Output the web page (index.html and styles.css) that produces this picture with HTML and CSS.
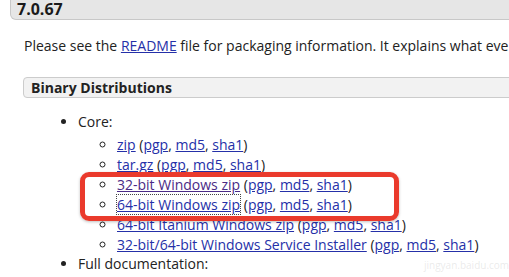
FILE: index.html
```html
<!DOCTYPE html>
<html lang="en">
<head>
  <meta charset="UTF-8">
  <title>Tomcat 7.0.67 downloads</title>
  <link rel="stylesheet" href="styles.css">
</head>
<body>

  <section class="page">
    <h3 class="version">7.0.67</h3>

    <div class="version-body">
      <p class="intro">Please see the <a href="#">README</a> file for packaging information. It explains what every distribution contains.</p>

      <h4 class="dist-title">Binary Distributions</h4>

      <ul class="dist-list">
        <li>Core:
          <ul class="sub-list">
            <li><a href="#">zip</a> (<a href="#">pgp</a>, <a href="#">md5</a>, <a href="#">sha1</a>)</li>
            <li><a href="#">tar.gz</a> (<a href="#">pgp</a>, <a href="#">md5</a>, <a href="#">sha1</a>)</li>
            <li><a href="#" class="visited">32-bit Windows zip</a> (<a href="#">pgp</a>, <a href="#">md5</a>, <a href="#">sha1</a>)</li>
            <li><a href="#" class="focused">64-bit Windows zip</a> (<a href="#">pgp</a>, <a href="#">md5</a>, <a href="#">sha1</a>)</li>
            <li><a href="#">64-bit Itanium Windows zip</a> (<a href="#">pgp</a>, <a href="#">md5</a>, <a href="#">sha1</a>)</li>
            <li><a href="#">32-bit/64-bit Windows Service Installer</a> (<a href="#">pgp</a>, <a href="#">md5</a>, <a href="#">sha1</a>)</li>
          </ul>
        </li>
        <li>Full documentation:</li>
      </ul>
    </div>
  </section>

  <!-- highlight drawn over the two windows rows -->
  <div class="highlight"></div>

  <div class="watermark">jingyan.baidu.com</div>

</body>
</html>
```

FILE: styles.css
```css
body {
  margin: 0;
  background: #fff;
  font-family: 'Open Sans', 'Liberation Sans', sans-serif;
  font-size: 14px;
  color: #222;
  overflow: hidden;
}

a {
  color: #2530a8;
}
a.visited {
  color: #4a2a86;
}
a.focused {
  outline: 1px dotted #444;
}

.page {
  width: 620px;
}

.version {
  margin: 0 0 0 10px;
  height: 20px;
  line-height: 19px;
  padding-left: 6px;
  font-size: 16px;
  font-weight: bold;
  color: #1a1a1a;
  background: #e6e6e6;
  border: 1px solid #c8c8c8;
  border-top: none;
  border-radius: 0 0 0 6px;
  box-sizing: border-box;
}

.version-body {
  margin-left: 23px;
}

.intro {
  margin: 16px 0 0 1px;
  line-height: 20px;
  white-space: nowrap;
}

.dist-title {
  margin: 21px 0 0;
  height: 21px;
  line-height: 19px;
  padding-left: 7px;
  font-size: 14px;
  font-weight: bold;
  background: #f2f2f2;
  border: 1px solid #cccccc;
  border-radius: 4px;
  box-sizing: border-box;
}

.dist-list {
  margin: 14px 0 0;
  padding-left: 55px;
  line-height: 20px;
}

.sub-list {
  margin: 3px 0 -1px;
  padding-left: 39px;
  list-style: circle;
  white-space: nowrap;
}

.highlight {
  position: absolute;
  left: 80px;
  top: 172px;
  width: 319px;
  height: 49px;
  box-sizing: border-box;
  border: 5px solid #ea3a2c;
  border-radius: 9px;
  box-shadow: 0 1px 3px rgba(0, 0, 0, 0.25);
}

.watermark {
  position: absolute;
  left: 424px;
  top: 258px;
  font-size: 10px;
  color: rgba(170, 170, 170, 0.25);
}
```
